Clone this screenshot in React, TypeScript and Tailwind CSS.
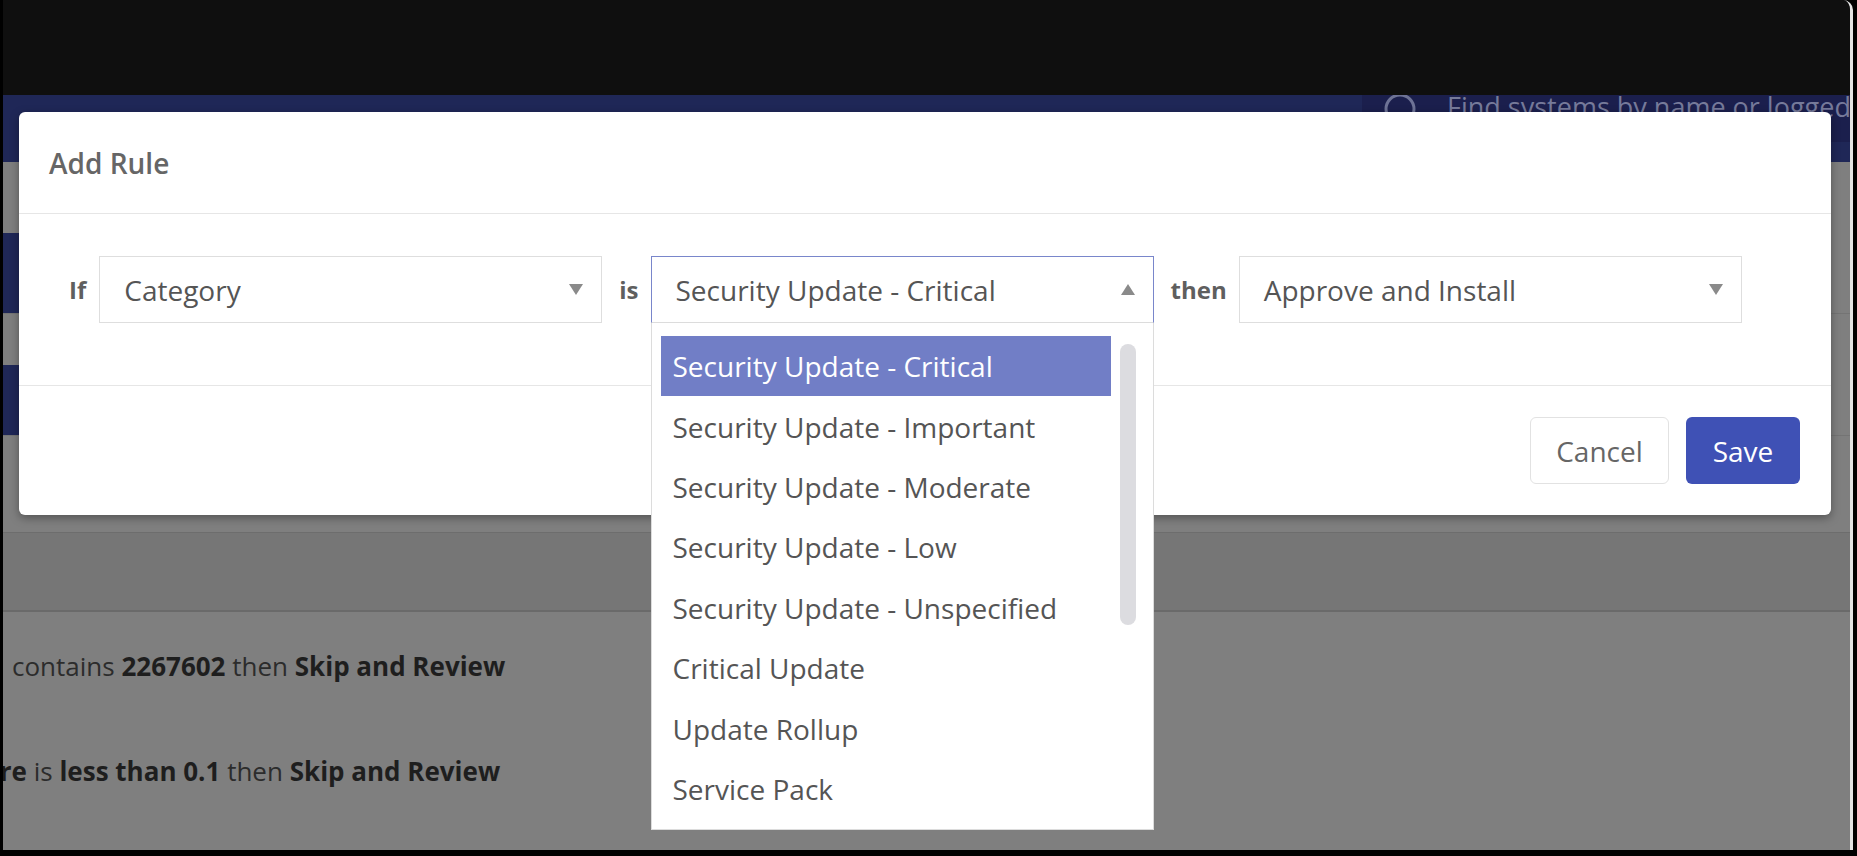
import React from 'react';

const options = [
  'Security Update - Critical',
  'Security Update - Important',
  'Security Update - Moderate',
  'Security Update - Low',
  'Security Update - Unspecified',
  'Critical Update',
  'Update Rollup',
  'Service Pack',
  'Feature Pack',
  'Definition Update',
  'Update',
];

const Caret = ({ up }: { up?: boolean }) => (
  <svg width="14" height="11" viewBox="0 0 14 11" className="shrink-0">
    <polygon points={up ? '7,0 14,11 0,11' : '0,0 14,0 7,11'} fill="#8a8a8a" />
  </svg>
);

const Select = ({ value, open }: { value: string; open?: boolean }) => (
  <div className="relative w-[503px] shrink-0">
    <div
      className={`h-[67px] flex items-center justify-between pl-[24px] pr-[18px] bg-white border text-[28px] text-[#555] ${
        open ? 'border-[#7986cb] border-b-[#dcdcdc]' : 'border-[#dedede]'
      }`}
    >
      <span>{value}</span>
      <Caret up={open} />
    </div>
    {open && (
      <div className="absolute left-0 top-full z-10 w-full h-[507px] bg-white border border-t-0 border-[#dcdcdc] overflow-hidden flex pl-[9px] pt-[13px]">
        <div className="w-[450px] shrink-0 flex flex-col">
          {options.map((o, i) => (
            <div
              key={o}
              className={`h-[60.4px] shrink-0 flex items-center pl-[12px] text-[28px] whitespace-nowrap ${
                i === 0 ? 'bg-[#717ec6] text-white' : 'text-[#555]'
              }`}
            >
              {o}
            </div>
          ))}
        </div>
        <div className="ml-[9px] w-[16px] shrink-0">
          <div className="mt-[8px] h-[281px] rounded-full bg-[#dcdce0]" />
        </div>
      </div>
    )}
  </div>
);

const Label = ({ children, first }: { children: React.ReactNode; first?: boolean }) => (
  <span className={`text-[24px] font-bold text-[#5f5f5f] ${first ? 'mr-[13px]' : 'ml-[17px] mr-[12px]'}`}>{children}</span>
);

export default function App() {
  return (
    <div className="w-[1857px] h-[856px] bg-black flex flex-col pl-[3px] pr-[4px] pb-[6px] overflow-hidden font-['Open_Sans',sans-serif]">
      <div className="flex-1 flex flex-col border-r-[3px] border-[#e4e4e4] rounded-tr-[10px] overflow-hidden">
        {/* window title bar */}
        <div className="h-[95px] shrink-0 bg-[#0f0f0f]" />

        {/* dimmed page */}
        <div className="relative flex-1 bg-[#7f7f7f] overflow-hidden">
          <div className="h-[67px] bg-[#1f2757] flex justify-end">
            <div className="w-[488px] h-[47px] bg-[#1b1f4d] flex items-start pl-[21px] overflow-hidden">
              <svg width="34" height="34" viewBox="0 0 34 34" className="mt-[-3px] shrink-0">
                <circle cx="17" cy="17" r="14" fill="none" stroke="#6e7396" strokeWidth="3" />
              </svg>
              <span className="ml-[30px] mt-[-7px] text-[27px] leading-[37px] text-[#767a9a] whitespace-nowrap">
                Find systems by name or logged in user
              </span>
            </div>
          </div>

          <div className="h-[152px] flex flex-col border-b border-[#747474]">
            <div className="h-[71px]" />
            <div className="h-[80px] w-[300px] bg-[#1f2757]" />
          </div>
          <div className="h-[122px] flex flex-col border-b border-[#747474]">
            <div className="h-[51px]" />
            <div className="h-[70px] w-[300px] bg-[#1f2757]" />
          </div>
          <div className="h-[97px] border-b border-[#6d6d6d]" />
          <div className="h-[79px] bg-[#767676] border-b-2 border-[#6a6a6a]" />

          <div className="pt-[36px] flex flex-col gap-[68px] text-[26px] leading-[37px] text-[#2c2c2c] whitespace-nowrap">
            <div className="ml-[9px]">
              contains <b className="text-[#1e1e1e]">2267602</b> then <b className="text-[#1e1e1e]">Skip and Review</b>
            </div>
            <div className="ml-[-47px]">
              <b className="text-[#1e1e1e]">Score</b> is <b className="text-[#1e1e1e]">less than 0.1</b> then{' '}
              <b className="text-[#1e1e1e]">Skip and Review</b>
            </div>
          </div>

          {/* modal */}
          <div className="absolute left-[16px] top-[17px] w-[1812px] bg-white rounded-[6px] shadow-[0_3px_10px_rgba(0,0,0,0.35)]">
            <div className="h-[102px] flex items-center pl-[30px] border-b border-[#e6e6e6]">
              <h2 className="text-[28px] font-semibold text-[#666]">Add Rule</h2>
            </div>
            <div className="pt-[42px] pb-[62px] pl-[50px] flex items-center border-b border-[#e6e6e6]">
              <Label first>If</Label>
              <Select value="Category" />
              <Label>is</Label>
              <Select value="Security Update - Critical" open />
              <Label>then</Label>
              <Select value="Approve and Install" />
            </div>
            <div className="p-[31px] flex justify-end gap-[17px]">
              <button className="h-[67px] w-[139px] rounded-[6px] border border-[#e2e2e2] bg-white text-[28px] text-[#666]">
                Cancel
              </button>
              <button className="h-[67px] w-[114px] rounded-[6px] bg-[#3f51b5] text-[28px] text-white">Save</button>
            </div>
          </div>
        </div>
      </div>
    </div>
  );
}
